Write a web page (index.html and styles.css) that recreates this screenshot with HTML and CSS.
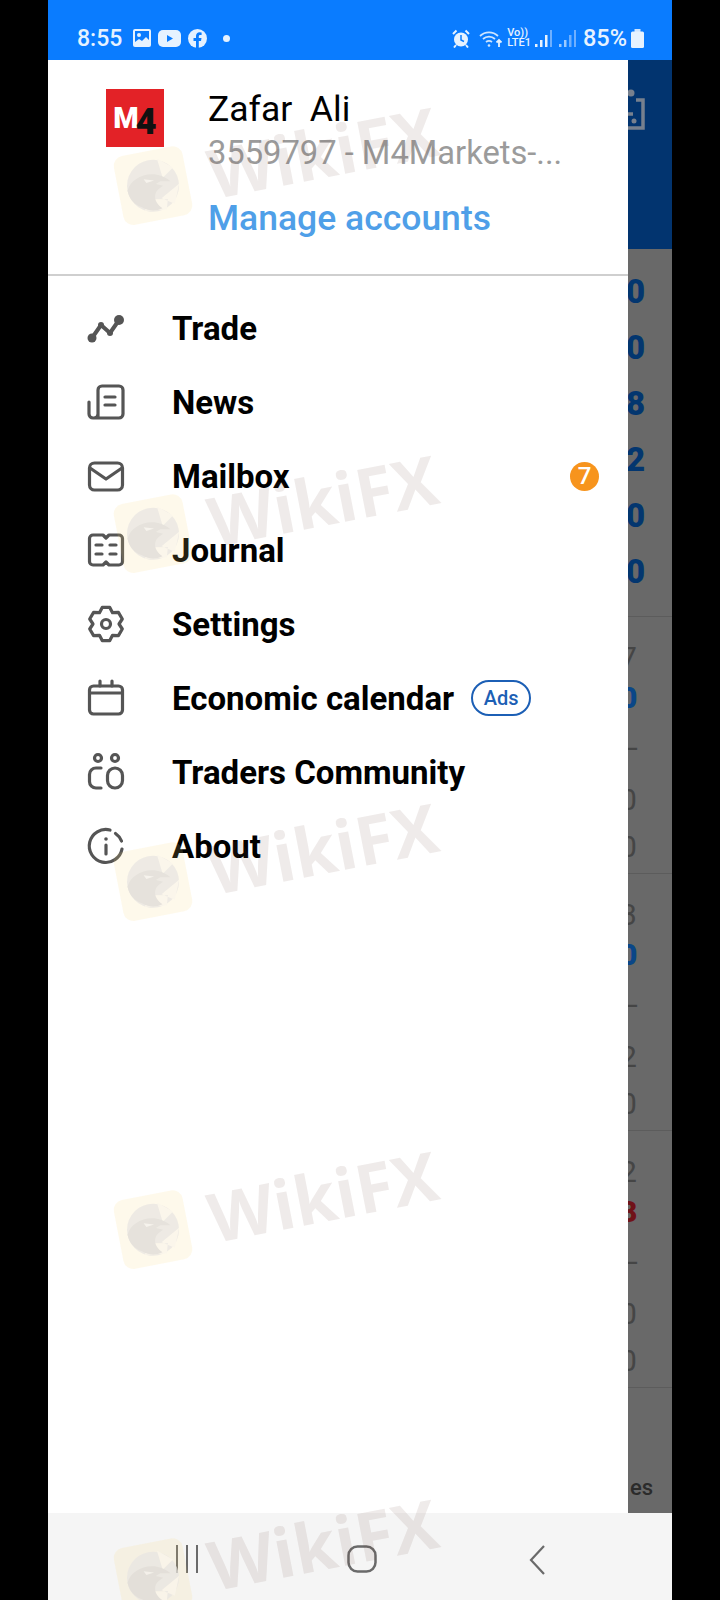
FILE: index.html
```html
<!DOCTYPE html>
<html lang="en">
<head>
    <meta charset="UTF-8">
    <meta name="viewport" content="width=device-width, initial-scale=1.0">
    <title>Menu</title>
    <link rel="stylesheet" href="styles.css">
</head>
<body>
    <svg class="defs">
        <symbol id="eagle" viewBox="0 0 54 54">
            <circle cx="27" cy="27" r="26" fill="#e8e5e2"/>
            <path d="M36 1l14 12-12 8zM53 30L45 49 33 41zM14 50l22 3 3-10-16-3z" fill="#fbf6ec"/>
            <path d="M1 27C6 17 20 12 33 17c5 2 9 5 12 9l-10-2-5 2 7 3c-5 2-9 4-10 9-1 4 1 9 5 13-8 2-14 0-20-5C5 42 1 35 1 27z" fill="#dcd9d6"/>
            <path d="M19 19l10 3-8 1z" fill="#f4f1ee"/>
        </symbol>
    </svg>
    <div class="phone">
        <div class="status">
            <div class="status-left">
                <span class="clock">8:55</span>
                <svg class="si" width="18" height="18" viewBox="0 0 18 18"><rect x="0" y="0" width="18" height="18" rx="2" fill="#e6f2ff"/><rect x="2" y="2" width="14" height="14" fill="#0a7cff"/><circle cx="6" cy="6" r="2" fill="#e6f2ff"/><path d="M2 13l4-3 3 2 4-4 3 3v5H2z" fill="#e6f2ff"/></svg>
                <svg class="si" width="23" height="17" viewBox="0 0 23 17"><rect width="23" height="17" rx="5" fill="#e6f2ff"/><path d="M9 5l6 3.500-6 3.500z" fill="#0a7cff"/></svg>
                <svg class="si" width="19" height="19" viewBox="0 0 19 19"><circle cx="9.500" cy="9.500" r="9.500" fill="#e6f2ff"/><path d="M8 19v-7H5.500V9H8V7c0-2.500 1.500-3.800 3.600-3.800l2 .2v2.500h-1.300c-1.200 0-1.500.7-1.500 1.500V9h2.700l-.5 3h-2.200v7z" fill="#0a7cff"/></svg>
                <span class="dot"></span>
            </div>
            <div class="status-right">
                <svg class="alarm" width="18" height="19" viewBox="0 0 18 19"><circle cx="9" cy="10.500" r="7" fill="#e6f2ff"/><path d="M9 6v5l3 1.500" stroke="#0a7cff" stroke-width="1.500" fill="none"/><path d="M1 5l3.500-3.500M17 5l-3.500-3.500M4 16l-2 2.500M14 16l2 2.500" stroke="#e6f2ff" stroke-width="2"/></svg>
                <svg width="24" height="19" viewBox="0 0 24 19" fill="none" stroke="#cfe5ff" stroke-width="1.800"><path d="M1 7a13 13 0 0 1 18 0M4 10a9 9 0 0 1 12 0M7 13a5 5 0 0 1 6 0"/><circle cx="10" cy="16.500" r="1.300" fill="#cfe5ff" stroke="none"/><path d="M20 18v-7M17.500 13.500l2.500-2.500 2.500 2.500" stroke="#e6f2ff"/></svg>
                <span class="volte"><span>Vo))</span><span>LTE1</span></span>
                <svg class="signal" width="18" height="19" viewBox="0 0 18 19"><rect x="0" y="15" width="2.500" height="3" fill="#e6f2ff"/><rect x="5" y="11" width="2.500" height="7" fill="#e6f2ff"/><rect x="10" y="6" width="2.500" height="12" fill="#e6f2ff"/><rect x="15" y="1" width="2" height="17" fill="#6fb0ff"/></svg>
                <svg class="signal" width="18" height="19" viewBox="0 0 18 19"><rect x="0" y="15" width="2.500" height="3" fill="#9ccaff"/><rect x="5" y="11" width="2.500" height="7" fill="#9ccaff"/><rect x="10" y="6" width="2.500" height="12" fill="#6fb0ff"/><rect x="15" y="1" width="2" height="17" fill="#6fb0ff"/></svg>
                <span class="batt-text">85%</span>
                <svg width="13" height="19" viewBox="0 0 13 19"><rect x="3.500" y="0" width="6" height="3" fill="#cfe5ff"/><rect x="0" y="2.500" width="13" height="16.500" rx="1.500" fill="#e6f2ff"/></svg>
            </div>
        </div>

        <div class="middle">
            <div class="drawer">
                <div class="account">
                    <div class="logo"><span class="logo-m">M</span><span class="logo-4">4</span></div>
                    <div class="account-text">
                        <div class="name">Zafar&nbsp; Ali</div>
                        <div class="number">3559797 - M4Markets-...</div>
                        <div class="manage">Manage accounts</div>
                    </div>
                </div>
                <ul class="menu">
                    <li class="item">
                        <svg class="ico thick" viewBox="0 0 36 36"><path d="M4 28L13 15l9 8 9-13"/><circle class="fill" cx="4" cy="28" r="4.500"/><circle class="fill" cx="13" cy="15" r="3"/><circle class="fill" cx="22" cy="23" r="3"/><circle class="fill" cx="31" cy="10" r="5"/></svg>
                        <span>Trade</span>
                    </li>
                    <li class="item">
                        <svg class="ico" viewBox="0 0 36 36"><path d="M10 34V6a4 4 0 0 1 4-4h17a4 4 0 0 1 4 4v24a4 4 0 0 1-4 4H5a4 4 0 0 1-4-4V18M6 34a4 4 0 0 0 4-4"/><path d="M17 13h10M17 21h10"/></svg>
                        <span>News</span>
                    </li>
                    <li class="item">
                        <svg class="ico" viewBox="0 0 36 36"><rect x="1.500" y="5" width="33" height="27" rx="5"/><path d="M2 10l16 11 16-11"/></svg>
                        <span>Mailbox</span>
                    </li>
                    <li class="item">
                        <svg class="ico" viewBox="0 0 36 36"><path d="M5 3h10l3 3 3-3h10a3.500 3.500 0 0 1 3.500 3.500v23A3.500 3.500 0 0 1 31 33H21l-3-3-3 3H5a3.500 3.500 0 0 1-3.500-3.500v-23A3.500 3.500 0 0 1 5 3z"/><path d="M8 13h6M8 22h6M22 13h6M22 22h6"/></svg>
                        <span>Journal</span>
                    </li>
                    <li class="item">
                        <svg class="ico" viewBox="0 0 36 36"><path d="M14.200 1.400h7.600l2.700 5.300 5.900-.3 3.900 6.600-3.300 4.999 3.300 5-3.900 6.600-5.900-.3-2.700 5.300h-7.600l-2.700-5.300-5.900.3-3.900-6.600 3.300-5-3.300-5 3.900-6.600 5.900.3z"/><circle cx="18" cy="18" r="4.500"/></svg>
                        <span>Settings</span>
                    </li>
                    <li class="item">
                        <svg class="ico" viewBox="0 0 36 36"><rect x="1.500" y="6" width="33" height="28" rx="4"/><path d="M2 13h32M12 1v5M24 1v5"/></svg>
                        <span>Economic calendar</span>
                        <span class="ads">Ads</span>
                    </li>
                    <li class="item">
                        <svg class="ico" viewBox="0 0 36 36"><circle cx="10" cy="4" r="3.500"/><circle cx="27" cy="4" r="3.500"/><path d="M13 14H8a6.500 6.500 0 0 0-6.500 6.500v7A6.500 6.500 0 0 0 8 34h5"/><rect x="19.500" y="14" width="15" height="20" rx="7.500"/></svg>
                        <span>Traders Community</span>
                    </li>
                    <li class="item">
                        <svg class="ico" viewBox="0 0 36 36"><path d="M22 2a16.500 16.500 0 1 0 12 19M33.500 13a16.500 16.500 0 0 0-6-7.500"/><path d="M18 17v9"/><circle class="fill" cx="18" cy="11" r="1.800"/></svg>
                        <span>About</span>
                    </li>
                </ul>
                <span class="badge">7</span>
            </div>

            <div class="backdrop">
                <div class="app-top">
                    <svg class="clip" width="17" height="44" viewBox="0 0 17 44" fill="none" stroke="#77808e" stroke-width="3.500"><circle cx="3" cy="5" r="3.500" fill="#77808e" stroke="none"/><path d="M8 12h7v28H-6"/><path d="M-4 26H5"/><circle cx="6" cy="33" r="2.500" fill="#77808e" stroke="none"/></svg>
                </div>
                <div class="quotes">
                    <div class="big">0</div>
                    <div class="big">0</div>
                    <div class="big">8</div>
                    <div class="big">2</div>
                    <div class="big">0</div>
                    <div class="big">0</div>
                </div>
                <div class="block">
                    <div class="cell">7</div>
                    <div class="cell blue">0</div>
                    <div class="cell">&ndash;</div>
                    <div class="cell">0</div>
                    <div class="cell">0</div>
                </div>
                <div class="block">
                    <div class="cell">3</div>
                    <div class="cell blue">0</div>
                    <div class="cell">&ndash;</div>
                    <div class="cell">2</div>
                    <div class="cell">0</div>
                </div>
                <div class="block">
                    <div class="cell">2</div>
                    <div class="cell red">8</div>
                    <div class="cell">&ndash;</div>
                    <div class="cell">0</div>
                    <div class="cell">0</div>
                </div>
                <div class="tabs">es</div>
            </div>
        </div>

        <div class="navbar">
            <svg width="24" height="28" viewBox="0 0 24 28" stroke="#6a6a6a" stroke-width="2"><path d="M2 0v28M12 0v28M22 0v28"/></svg>
            <svg width="30" height="28" viewBox="0 0 30 28" fill="none" stroke="#6a6a6a" stroke-width="2.500"><rect x="1.500" y="1.500" width="27" height="25" rx="9"/></svg>
            <svg width="16" height="30" viewBox="0 0 16 30" fill="none" stroke="#6a6a6a" stroke-width="2.200"><path d="M15 1L2 15l13 14"/></svg>
        </div>

        <!-- watermark sits over the whole screenshot -->
        <div class="wm wm1"><div class="wm-tile"><svg width="54" height="54"><use href="#eagle"/></svg></div><span class="wm-text">WikiFX</span></div>
        <div class="wm wm2"><div class="wm-tile"><svg width="54" height="54"><use href="#eagle"/></svg></div><span class="wm-text">WikiFX</span></div>
        <div class="wm wm3"><div class="wm-tile"><svg width="54" height="54"><use href="#eagle"/></svg></div><span class="wm-text">WikiFX</span></div>
        <div class="wm wm4"><div class="wm-tile"><svg width="54" height="54"><use href="#eagle"/></svg></div><span class="wm-text">WikiFX</span></div>
        <div class="wm wm5"><div class="wm-tile"><svg width="54" height="54"><use href="#eagle"/></svg></div><span class="wm-text">WikiFX</span></div>
    </div>
</body>
</html>
```

FILE: styles.css
```css
html, body {
    margin: 0;
    padding: 0;
    background-color: #000;
}
body {
    font-family: Roboto, "Liberation Sans", sans-serif;
    width: 720px;
    height: 1600px;
    overflow: hidden;
}
.defs {
    position: absolute;
    width: 0;
    height: 0;
}
.phone {
    width: 624px;
    height: 1600px;
    margin-left: 48px;
    display: flex;
    flex-direction: column;
    overflow: hidden;
}

/* status bar */
.status {
    height: 60px;
    background-color: #0a7cff;
    color: #e6f2ff;
    display: flex;
    justify-content: space-between;
    align-items: center;
    padding: 16px 28px 0 29px;
    box-sizing: border-box;
    flex: none;
}
.status-left, .status-right {
    display: flex;
    align-items: center;
}
.clock {
    font-size: 23px;
    font-weight: 500;
    width: 56px;
}
.status-left .si {
    margin-right: 7px;
}
.dot {
    width: 7px;
    height: 7px;
    border-radius: 50%;
    background-color: #e6f2ff;
    margin-left: 9px;
}
.status-right svg {
    margin-right: 10px;
}
.status-right svg:last-child {
    margin-right: 0;
}
.status-right .alarm {
    margin-right: 9px;
}
.status-right .signal {
    margin-right: 6px;
}
.volte {
    display: flex;
    flex-direction: column;
    font-size: 11px;
    line-height: 10px;
    font-weight: 500;
    margin: 0 4px 0 -6px;
}
.batt-text {
    font-size: 23.500px;
    font-weight: 500;
    margin: 0 4px 0 0;
}

.middle {
    display: flex;
    height: 1453px;
    flex: none;
}

/* drawer */
.drawer {
    width: 580px;
    flex: none;
    background-color: #fff;
    position: relative;
}
.account {
    height: 216px;
    box-sizing: border-box;
    border-bottom: 2px solid #cfcfcf;
    display: flex;
    gap: 44px;
    padding: 29px 0 0 58px;
}
.logo {
    width: 58px;
    height: 58px;
    flex: none;
    background-color: #e32227;
    display: flex;
    align-items: center;
    justify-content: center;
    font-weight: 900;
    font-size: 29px;
    line-height: 1;
}
.logo-m {
    color: #fff;
}
.logo-4 {
    color: #111;
    font-size: 36px;
    margin-left: -3px;
    margin-top: 7px;
}
.name {
    font-size: 35.500px;
    line-height: 40px;
    color: #000;
}
.number {
    font-size: 32.700px;
    line-height: 40px;
    color: #9b9b9b;
    margin-top: 4px;
}
.manage {
    font-size: 35.500px;
    line-height: 40px;
    font-weight: 500;
    color: #4f9fe8;
    margin-top: 25px;
}
.menu {
    list-style: none;
    margin: 0;
    padding: 15px 0 0 40px;
}
.item {
    height: 74px;
    display: flex;
    align-items: center;
    font-size: 33px;
    font-weight: 700;
    color: #000;
}
.ico {
    width: 36px;
    height: 36px;
    margin-right: 48px;
    fill: none;
    stroke: #555;
    stroke-width: 3.200;
    stroke-linejoin: round;
    stroke-linecap: round;
    overflow: visible;
    flex: none;
}
.ico.thick {
    stroke-width: 4;
}
.ico .fill {
    fill: #555;
    stroke: none;
}
.ads {
    margin-left: 17px;
    width: 60px;
    height: 36px;
    box-sizing: border-box;
    border: 2px solid #1c5fb5;
    border-radius: 18px;
    color: #1c5fb5;
    font-size: 20px;
    font-weight: 500;
    display: flex;
    align-items: center;
    justify-content: center;
}
.badge {
    position: absolute;
    left: 522px;
    top: 402px;
    width: 29px;
    height: 29px;
    border-radius: 50%;
    background-color: #f7941d;
    color: #fff;
    font-size: 24px;
    font-weight: 500;
    line-height: 29px;
    text-align: center;
}

/* app behind the drawer, dimmed */
.backdrop {
    flex: 1;
    background-color: #696969;
    overflow: hidden;
    color: #454545;
}
.app-top {
    height: 189px;
    background-color: #02346f;
    padding-top: 28px;
    box-sizing: border-box;
}
.clip {
    display: block;
}
.quotes {
    height: 368px;
    box-sizing: border-box;
    padding-top: 15px;
    border-bottom: 1px solid #5c5c5c;
}
.big {
    height: 56px;
    line-height: 56px;
    font-size: 33px;
    font-weight: 900;
    color: #03366f;
    margin-left: -2px;
}
.block {
    height: 257px;
    box-sizing: border-box;
    padding-top: 20px;
    border-bottom: 1px solid #5c5c5c;
    display: grid;
    grid-template-rows: 40px 40px 62px 40px 54px;
    align-items: center;
}
.cell {
    font-size: 30px;
    margin-left: -8px;
}
.cell.blue {
    color: #0a4688;
    font-weight: 900;
}
.cell.red {
    color: #701218;
    font-weight: 900;
}
.tabs {
    font-size: 22px;
    font-weight: 500;
    color: #2b2b2b;
    margin: 87px 0 0 2px;
}

/* bottom nav */
.navbar {
    height: 87px;
    flex: none;
    background-color: #f5f5f5;
    display: grid;
    grid-template-columns: repeat(3, 175px);
    justify-content: center;
    justify-items: center;
    align-items: start;
    padding: 32px 0 0 4px;
    box-sizing: border-box;
}

/* watermark */
.wm {
    position: absolute;
    left: 112px;
    display: flex;
    align-items: flex-start;
    gap: 22px;
    transform: rotate(-11deg);
    transform-origin: 0 0;
    pointer-events: none;
}
.wm1 { top: 158px; }
.wm2 { top: 506px; }
.wm3 { top: 854px; }
.wm4 { top: 1202px; }
.wm5 { top: 1550px; }
.wm-tile {
    width: 70px;
    height: 70px;
    border-radius: 10px;
    background-color: rgba(250, 215, 120, 0.15);
    display: flex;
    align-items: center;
    justify-content: center;
}
.wm-tile svg {
    opacity: 0.7;
}
.wm-text {
    font-family: "Open Sans", sans-serif;
    font-weight: 700;
    font-size: 68px;
    line-height: 68px;
    color: rgba(110, 70, 60, 0.11);
    margin-top: 0;
}
```
